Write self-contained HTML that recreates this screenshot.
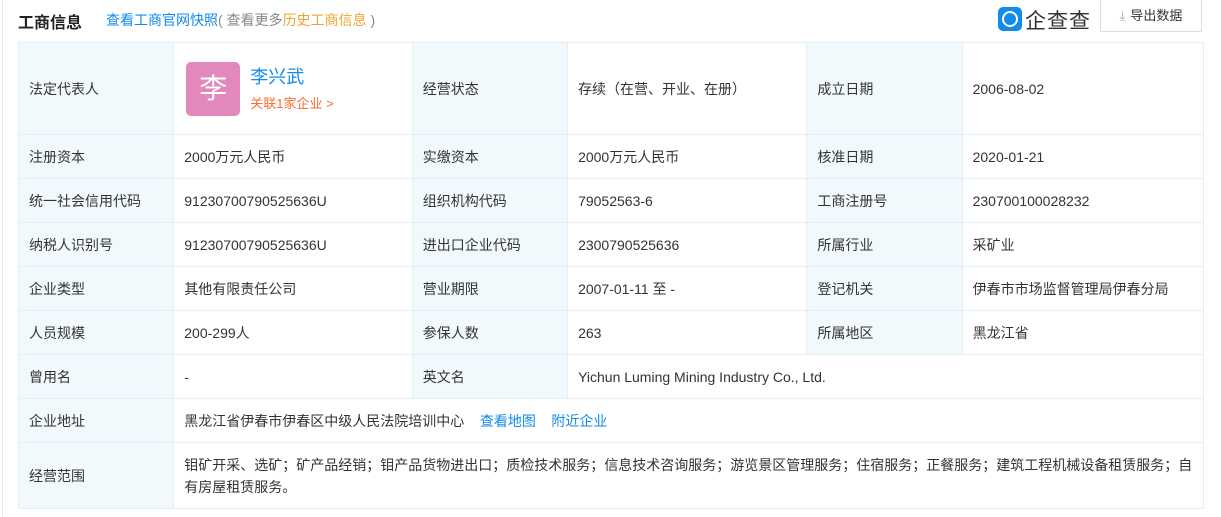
<!DOCTYPE html>
<html><head><meta charset="utf-8"><style>
body{margin:0;width:1221px;height:517px;background:#fff;font-family:"Liberation Sans","Noto Sans CJK SC",sans-serif;font-size:14px;color:#333;position:relative;overflow:hidden}
.lb{position:absolute;left:2px;top:0;width:1px;height:517px;background:#e8e8e8}
.title{position:absolute;left:18px;top:9px;font-size:16px;font-weight:bold;color:#222}
.links{position:absolute;left:106px;top:10px;font-size:14px;color:#888}
.links a{color:#128bed;text-decoration:none}
.links .o{color:#f0a431}
.logo{position:absolute;left:998px;top:5px;font-size:21px;color:#333;letter-spacing:1px}
.logo i{display:inline-block;width:24px;height:24px;background:#128bed;border-radius:5px;vertical-align:-3px;margin-right:3px;position:relative}
.logo i:after{content:"";position:absolute;left:4px;top:4px;width:12px;height:12px;border:2px solid #fff;border-radius:50%}
.btn{position:absolute;left:1100px;top:0;width:102px;height:32px;border:1px solid #ddd;border-top:none;font-size:13px;color:#333;line-height:31px;text-align:center;box-sizing:border-box}
.btn span{color:#aaa;margin-right:5px}
table{position:absolute;left:18px;top:42px;border-collapse:collapse;width:1186px}
td{border:1px solid #e4eef6;padding:0 10px;height:43px;color:#333;font-size:14px}
td.l{background:#f2f9fc;width:135px}
a{color:#128bed;text-decoration:none}
.av{display:inline-block;width:54px;height:54px;background:#e388bd;border-radius:5px;color:#fff;font-size:28px;text-align:center;line-height:54px;vertical-align:middle;margin-left:2px}
</style></head><body>
<div class="lb"></div>
<div class="title">工商信息</div>
<div class="links"><a>查看工商官网快照</a>( 查看更多<span class="o">历史工商信息</span> )</div>
<div class="logo"><i></i>企查查</div>
<div class="btn"><span>⤓</span>导出数据</div>
<table>
<colgroup><col style="width:155px"><col style="width:239px"><col style="width:155px"><col style="width:240px"><col style="width:155px"><col style="width:242px"></colgroup>
<tr style="height:92px"><td class="l">法定代表人</td><td><div style="display:flex;align-items:center"><span class="av">李</span><div style="margin-left:10px"><div style="color:#128bed;font-size:18px;line-height:24px">李兴武</div><div style="color:#fd6c33;font-size:13px;margin-top:4px">关联1家企业 &gt;</div></div></div></td><td class="l">经营状态</td><td>存续（在营、开业、在册）</td><td class="l">成立日期</td><td>2006-08-02</td></tr>
<tr><td class="l">注册资本</td><td>2000万元人民币</td><td class="l">实缴资本</td><td>2000万元人民币</td><td class="l">核准日期</td><td>2020-01-21</td></tr>
<tr><td class="l">统一社会信用代码</td><td>91230700790525636U</td><td class="l">组织机构代码</td><td>79052563-6</td><td class="l">工商注册号</td><td>230700100028232</td></tr>
<tr><td class="l">纳税人识别号</td><td>91230700790525636U</td><td class="l">进出口企业代码</td><td>2300790525636</td><td class="l">所属行业</td><td>采矿业</td></tr>
<tr><td class="l">企业类型</td><td>其他有限责任公司</td><td class="l">营业期限</td><td>2007-01-11 至 -</td><td class="l">登记机关</td><td>伊春市市场监督管理局伊春分局</td></tr>
<tr><td class="l">人员规模</td><td>200-299人</td><td class="l">参保人数</td><td>263</td><td class="l">所属地区</td><td>黑龙江省</td></tr>
<tr><td class="l">曾用名</td><td>-</td><td class="l">英文名</td><td colspan="3">Yichun Luming Mining Industry Co., Ltd.</td></tr>
<tr><td class="l">企业地址</td><td colspan="5">黑龙江省伊春市伊春区中级人民法院培训中心 &nbsp;&nbsp; <a>查看地图</a> &nbsp;&nbsp; <a>附近企业</a></td></tr>
<tr style="height:66px"><td class="l">经营范围</td><td colspan="5" style="line-height:22px">钼矿开采、选矿；矿产品经销；钼产品货物进出口；质检技术服务；信息技术咨询服务；游览景区管理服务；住宿服务；正餐服务；建筑工程机械设备租赁服务；自有房屋租赁服务。</td></tr>
</table>
</body></html>
